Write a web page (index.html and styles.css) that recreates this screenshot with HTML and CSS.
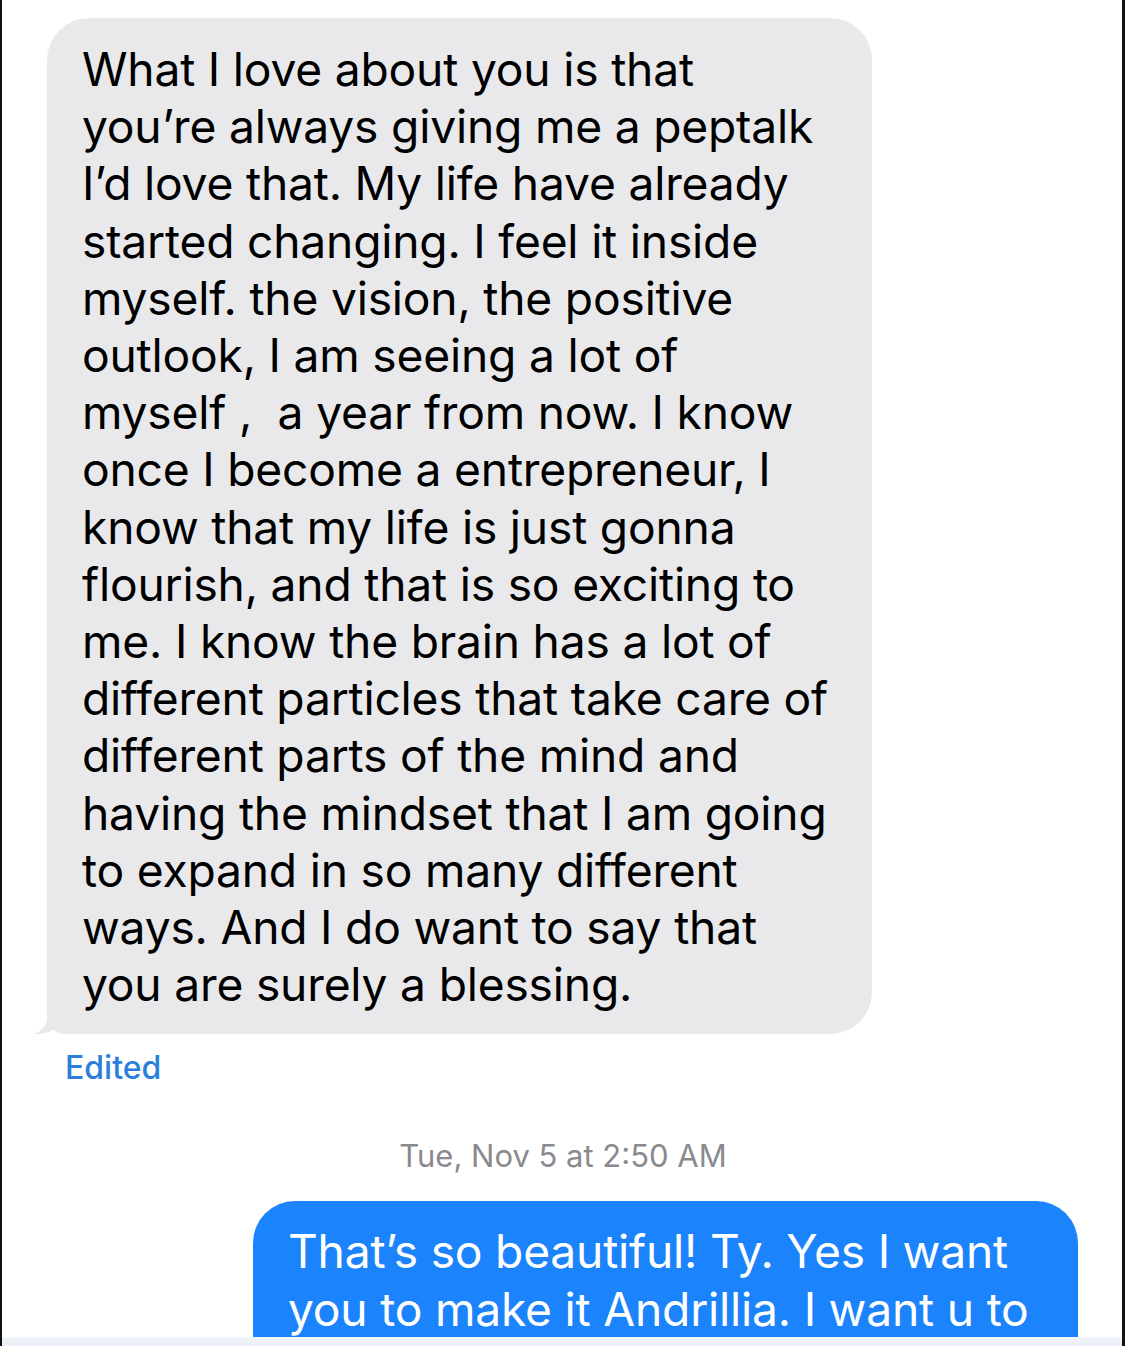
FILE: index.html
```html
<!DOCTYPE html>
<html>
<head>
<meta charset="utf-8">
<link rel="stylesheet" href="styles.css">
</head>
<body>
<div class="screen">
  <div class="row row-in">
    <div class="bubble bubble-in">
      <p class="msg">What I love about you is that<br>you’re always giving me a peptalk<br>I’d love that. My life have already<br>started changing. I feel it inside<br>myself. the vision, the positive<br>outlook, I am seeing a lot of<br>myself ,&nbsp; a year from now. I know<br>once I become a entrepreneur, I<br>know that my life is just gonna<br>flourish, and that is so exciting to<br>me. I know the brain has a lot of<br>different particles that take care of<br>different parts of the mind and<br>having the mindset that I am going<br>to expand in so many different<br>ways. And I do want to say that<br>you are surely a blessing.</p>
      <svg class="tail" width="30" height="28" viewBox="0 0 30 28"><path d="M14 0 L14 12 C14 20 8 26 0 28 C8 28.6 17 27 24 21 L24 0 Z" fill="#e9e9eb"/></svg>
    </div>
  </div>
  <div class="edited">Edited</div>
  <div class="stamp">Tue, Nov 5 at 2:50 AM</div>
  <div class="row row-out">
    <div class="bubble bubble-out">
      <p class="msg">That’s so beautiful! Ty. Yes I want<br>you to make it Andrillia. I want u to</p>
    </div>
  </div>
  <div class="fade"></div>
</div>
</body>
</html>
```
FILE: styles.css
```css
html, body {
  margin: 0;
  padding: 0;
  background: #fff;
}
.screen {
  position: relative;
  width: 1125px;
  height: 1346px;
  box-sizing: border-box;
  border-left: 2px solid #111;
  border-right: 3px solid #111;
  overflow: hidden;
  display: flex;
  flex-direction: column;
  font-family: Inter, "Liberation Sans", sans-serif;
}
.row {
  display: flex;
}
.row-in {
  padding: 18px 0 0 45px;
}
.row-out {
  justify-content: flex-end;
  padding: 28px 44px 0 0;
}
.bubble {
  position: relative;
  width: 825px;
  box-sizing: border-box;
  border-radius: 42px;
}
.bubble-in {
  background: #e9e9eb;
  padding: 23px 10px 21px 35px;
  border-bottom-left-radius: 18px;
}
.bubble-out {
  background: #1b83fb;
  padding: 22px 10px 20px 35px;
  border-radius: 42px 42px 0 0;
}
.msg {
  margin: 0;
  font-size: 46.2px;
  line-height: 57.2px;
  letter-spacing: -0.2px;
  color: #000;
  white-space: nowrap;
}
.bubble-out .msg {
  color: #fff;
}
.tail {
  position: absolute;
  left: -14px;
  bottom: 0;
}
.edited {
  margin: 17px 0 0 63px;
  font-size: 32px;
  font-weight: 500;
  line-height: 34px;
  color: #2a7fdc;
}
.stamp {
  align-self: center;
  margin-top: 54px;
  padding-left: 2px;
  font-size: 31px;
  line-height: 34px;
  color: #8a8a8e;
}
.fade {
  position: absolute;
  left: 0;
  right: 0;
  bottom: 0;
  height: 9px;
  background: linear-gradient(#f2f5fa, #e9eef7);
}
```
